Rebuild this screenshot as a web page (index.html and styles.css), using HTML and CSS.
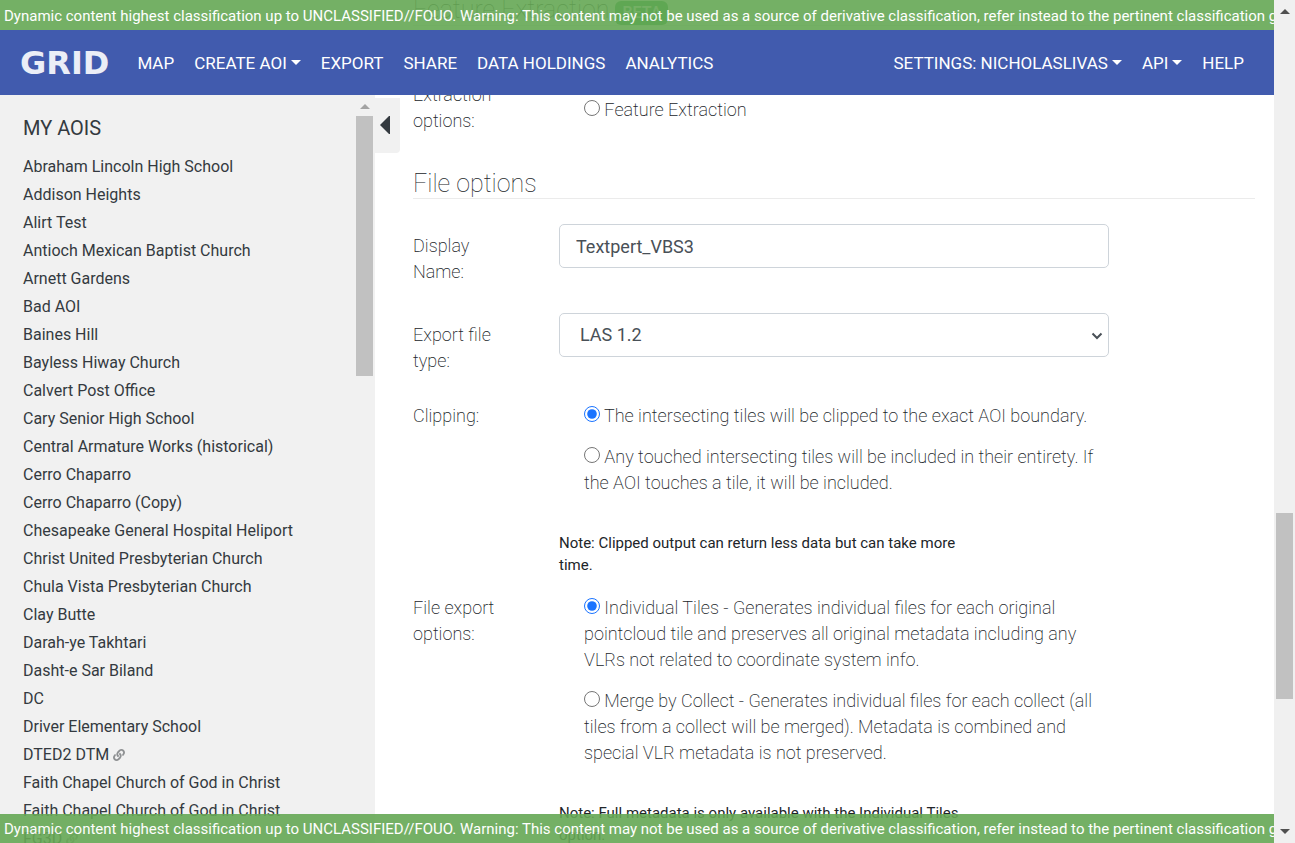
FILE: index.html
```html
<!DOCTYPE html>
<html lang="en">
<head>
<meta charset="utf-8">
<title>GRID - Export</title>
<link rel="stylesheet" href="styles.css">
</head>
<body>
<svg class="sprite" aria-hidden="true">
  <symbol id="link" viewBox="0 0 512 512"><path fill="currentColor" d="M326.612 185.391c59.747 59.809 58.927 155.698.36 214.59-.11.12-.24.25-.36.37l-67.2 67.2c-59.27 59.27-155.699 59.262-214.96 0-59.27-59.26-59.27-155.7 0-214.96l37.106-37.106c9.84-9.84 26.786-3.3 27.294 10.606.648 17.722 3.826 35.527 9.69 52.721 1.986 5.822.567 12.262-3.783 16.612l-13.087 13.087c-28.026 28.026-28.905 73.66-1.155 101.96 28.024 28.579 74.086 28.749 102.325.51l67.2-67.19c28.191-28.191 28.073-73.757 0-101.83-3.701-3.694-7.429-6.564-10.341-8.569a16.037 16.037 0 0 1-6.947-12.606c-.396-10.567 3.348-21.456 11.698-29.806l21.054-21.055c5.521-5.521 14.182-6.199 20.584-1.731a152.482 152.482 0 0 1 20.522 17.197zM467.547 44.449c-59.261-59.262-155.69-59.27-214.96 0l-67.2 67.2c-.12.12-.25.25-.36.37-58.566 58.892-59.387 154.781.36 214.59a152.454 152.454 0 0 0 20.521 17.196c6.402 4.468 15.064 3.789 20.584-1.731l21.054-21.055c8.35-8.35 12.094-19.239 11.698-29.806a16.037 16.037 0 0 0-6.947-12.606c-2.912-2.005-6.64-4.875-10.341-8.569-28.073-28.073-28.191-73.639 0-101.83l67.2-67.19c28.239-28.239 74.3-28.069 102.325.51 27.75 28.3 26.872 73.934-1.155 101.96l-13.087 13.087c-4.35 4.35-5.769 10.79-3.783 16.612 5.864 17.194 9.042 34.999 9.69 52.721.509 13.906 17.454 20.446 27.294 10.606l37.106-37.106c59.271-59.259 59.271-155.699.001-214.959z"/></symbol>
</svg>
<div class="app">
  <div class="viewport">
    <main class="content">
      <form class="export-form">
        <h2 class="section-title">Feature Extraction <span class="badge">BETA</span></h2>
        <div class="row row-first" role="radiogroup" aria-labelledby="fx-label">
          <div class="row-label" id="fx-label">Feature Extraction options:</div>
          <div class="options options-late">
            <label class="option"><input type="radio" name="fx"> Feature Extraction</label>
          </div>
        </div>

        <h2 class="section-title">File options</h2>
        <div class="row">
          <label class="row-label" for="display-name">Display Name:</label>
          <input class="control" id="display-name" type="text" value="Textpert_VBS3">
        </div>
        <div class="row row-tight">
          <label class="row-label" for="file-type">Export file type:</label>
          <div class="select-wrap">
            <select class="control select" id="file-type"><option>LAS 1.2</option></select>
            <svg class="chevron" viewBox="0 0 12 8" aria-hidden="true"><path d="M1.500 1.500 6 6l4.500-4.500" fill="none" stroke="currentColor" stroke-width="2"/></svg>
          </div>
        </div>
        <div class="row row-noted" role="radiogroup" aria-labelledby="clip-label">
          <div class="row-label" id="clip-label">Clipping:</div>
          <div>
            <div class="options">
              <label class="option"><input type="radio" name="clip" checked> The intersecting tiles will be clipped to the exact AOI boundary.</label>
              <label class="option"><input type="radio" name="clip"> Any touched intersecting tiles will be included in their entirety. If the AOI touches a tile, it will be included.</label>
            </div>
            <p class="note">Note: Clipped output can return less data but can take more time.</p>
          </div>
        </div>
        <div class="row row-noted" role="radiogroup" aria-labelledby="out-label">
          <div class="row-label" id="out-label">File export options:</div>
          <div>
            <div class="options">
              <label class="option"><input type="radio" name="out" checked> Individual Tiles - Generates individual files for each original pointcloud tile and preserves all original metadata including any VLRs not related to coordinate system info.</label>
              <label class="option"><input type="radio" name="out"> Merge by Collect - Generates individual files for each collect (all tiles from a collect will be merged). Metadata is combined and special VLR metadata is not preserved.</label>
            </div>
            <p class="note">Note: Full metadata is only available with the Individual Tiles option.</p>
          </div>
        </div>
      </form>
    </main>

    <aside class="sidebar">
      <div class="sidebar-body">
        <h1 class="sidebar-title">MY AOIS</h1>
        <ul class="aoi-list">
          <li><a href="#">Abraham Lincoln High School</a></li>
          <li><a href="#">Addison Heights</a></li>
          <li><a href="#">Alirt Test</a></li>
          <li><a href="#">Antioch Mexican Baptist Church</a></li>
          <li><a href="#">Arnett Gardens</a></li>
          <li><a href="#">Bad AOI</a></li>
          <li><a href="#">Baines Hill</a></li>
          <li><a href="#">Bayless Hiway Church</a></li>
          <li><a href="#">Calvert Post Office</a></li>
          <li><a href="#">Cary Senior High School</a></li>
          <li><a href="#">Central Armature Works (historical)</a></li>
          <li><a href="#">Cerro Chaparro</a></li>
          <li><a href="#">Cerro Chaparro (Copy)</a></li>
          <li><a href="#">Chesapeake General Hospital Heliport</a></li>
          <li><a href="#">Christ United Presbyterian Church</a></li>
          <li><a href="#">Chula Vista Presbyterian Church</a></li>
          <li><a href="#">Clay Butte</a></li>
          <li><a href="#">Darah-ye Takhtari</a></li>
          <li><a href="#">Dasht-e Sar Biland</a></li>
          <li><a href="#">DC</a></li>
          <li><a href="#">Driver Elementary School</a></li>
          <li><a href="#">DTED2 DTM</a> <svg class="link-icon" aria-hidden="true"><use href="#link"/></svg></li>
          <li><a href="#">Faith Chapel Church of God in Christ</a></li>
          <li><a href="#">Faith Chapel Church of God in Christ</a></li>
          <li><a href="#">FG3D</a> <svg class="link-icon" aria-hidden="true"><use href="#link"/></svg></li>
        </ul>
      </div>
      <div class="side-scroll" aria-hidden="true">
        <span class="arrow-up"></span>
        <span class="side-thumb"></span>
      </div>
      <button class="collapse" type="button" aria-label="Collapse sidebar"><svg class="collapse-icon" viewBox="0 0 10 18" aria-hidden="true"><path d="M10 0v18H9L0 9l9-9z" fill="currentColor"/></svg></button>
    </aside>

    <header class="navbar">
      <a class="logo" href="#">GRID</a>
      <nav class="nav">
        <a href="#">MAP</a>
        <a href="#" class="drop">CREATE AOI</a>
        <a href="#">EXPORT</a>
        <a href="#">SHARE</a>
        <a href="#">DATA HOLDINGS</a>
        <a href="#">ANALYTICS</a>
      </nav>
      <nav class="nav nav-end">
        <a href="#" class="drop">SETTINGS: NICHOLASLIVAS</a>
        <a href="#" class="drop">API</a>
        <a href="#">HELP</a>
      </nav>
    </header>
    <div class="banner banner-top">Dynamic content highest classification up to UNCLASSIFIED//FOUO. Warning: This content may not be used as a source of derivative classification, refer instead to the pertinent classification guide.</div>
    <div class="banner banner-bottom">Dynamic content highest classification up to UNCLASSIFIED//FOUO. Warning: This content may not be used as a source of derivative classification, refer instead to the pertinent classification guide.</div>
  </div>
  <div class="page-scroll" aria-hidden="true">
    <span class="arrow-up dark"></span>
    <div class="page-track"><span class="page-thumb"></span></div>
    <span class="arrow-down"></span>
  </div>
</div>
</body>
</html>
```
FILE: styles.css
```css
* { box-sizing: border-box; }

body {
  margin: 0;
  font-family: Roboto, "Liberation Sans", sans-serif;
  font-size: 18px;
  line-height: 26px;
  font-weight: 200;
  color: #212529;
  background: #fff;
}

a { color: inherit; text-decoration: none; }
.sprite { display: none; }

.app {
  display: grid;
  grid-template-columns: minmax(0, 1fr) 21px;
  height: 100vh;
  overflow: hidden;
}

.viewport { position: relative; overflow: hidden; }

/* classification banners, translucent over the page */
.banner {
  position: absolute;
  left: 0;
  right: 0;
  padding: 0 4px;
  overflow: hidden;
  white-space: nowrap;
  font-size: 15px;
  font-weight: 400;
  color: #fff;
  background: #66a855;
  opacity: 0.9;
}
.banner-top { top: 0; height: 30px; line-height: 32px; }
.banner-bottom { bottom: 0; height: 29px; line-height: 30px; }

.navbar {
  position: absolute;
  top: 30px;
  left: 0;
  right: 0;
  height: 65px;
  display: flex;
  align-items: center;
  padding: 0 30px 0 20px;
  background: #415bae;
  color: #fff;
  font-size: 17px;
  font-weight: 400;
}
.logo {
  margin-right: 28px;
  font: bold 32px/40px "DejaVu Sans", sans-serif;
  color: #ebeef7;
}
.nav { display: flex; gap: 20px; }
.nav-end { margin-left: auto; }
.drop::after {
  content: "";
  display: inline-block;
  margin-left: 4px;
  vertical-align: 4px;
  border: 5px solid transparent;
  border-top-color: currentColor;
  border-bottom: 0;
}

/* sidebar */
.sidebar {
  position: absolute;
  top: 95px;
  bottom: 0;
  left: 0;
  width: 375px;
  display: flex;
  background: #f1f1f1;
  color: #343a40;
}
.sidebar-body { flex: 1; overflow: hidden; padding: 20px 0 0 23px; }
.sidebar-title { margin: 0 0 12px; font-size: 20px; line-height: 26px; font-weight: 400; }
.aoi-list {
  margin: 0;
  padding: 0;
  list-style: none;
  font-size: 16px;
  line-height: 28px;
  font-weight: 400;
}
.link-icon { width: 12px; height: 12px; vertical-align: -1px; color: #8f9193; }
.side-scroll {
  width: 19px;
  padding: 9px 2px 0 0;
  display: flex;
  flex-direction: column;
  align-items: center;
  gap: 7px;
}
.side-thumb { width: 17px; height: 260px; background: #c1c1c1; }
.arrow-up {
  border: 5px solid transparent;
  border-bottom-color: #a3a3a3;
  border-top: 0;
}
.collapse {
  position: absolute;
  left: 100%;
  top: 3px;
  width: 25px;
  height: 55px;
  padding: 0 0 2px 5px;
  border: 0;
  border-radius: 0 0 4px 0;
  background: #f1f1f1;
  color: #343a40;
  display: flex;
  align-items: center;
}
.collapse-icon { width: 10px; height: 18px; }

/* export form; starts slightly scrolled under the top banner */
.content { padding: 0 19px 0 413px; margin-top: -5px; }
.section-title {
  margin: 0 0 25px;
  border-bottom: 1px solid #ebebeb;
  font-size: 25px;
  line-height: 29px;
  font-weight: 100;
}
.badge {
  display: inline-block;
  padding: 0 7px;
  border-radius: 6px;
  background: #28a745;
  color: #fff;
  font-size: 16px;
  line-height: 24px;
  font-weight: 500;
}
.row {
  display: grid;
  grid-template-columns: 116px minmax(0, 550px);
  column-gap: 30px;
  align-items: start;
  margin-bottom: 28px;
}
.row-label { padding-top: 9px; padding-right: 16px; }
.row-tight { margin-bottom: 20px; }
.row-noted { margin-bottom: 10px; }
.row-first { margin-bottom: 35px; }
.row-first .row-label { padding-top: 5px; }

.control {
  width: 100%;
  height: 44px;
  padding: 0 16px;
  border: 1px solid #ced4da;
  border-radius: 5px;
  background: #fff;
  color: #495057;
  font: 400 18px/26px Roboto, "Liberation Sans", sans-serif;
}
.select-wrap { position: relative; }
.select { appearance: none; padding: 0 20px; }
.chevron {
  position: absolute;
  right: 6px;
  top: 19px;
  width: 12px;
  height: 8px;
  color: #495057;
  pointer-events: none;
}

.options { display: grid; gap: 15px; padding: 9px 0 0 25px; }
.options-late { padding-top: 46px; }
.option input { width: 16px; height: 16px; margin: 0; vertical-align: 0; accent-color: #1a73ff; }
.note { margin: 36px 0 0; max-width: 410px; font-size: 15px; line-height: 22px; font-weight: 400; }

/* page scroll bar */
.page-scroll {
  display: flex;
  flex-direction: column;
  align-items: center;
  padding: 9px 0;
  background: #f0f0f0;
}
.page-track { flex: 1; display: flex; flex-direction: column; }
.page-track::before { content: ""; flex: 499 0 0; }
.page-track::after { content: ""; flex: 130 0 0; }
.page-thumb { flex: 186 0 0; width: 17px; background: #c1c1c1; }
.dark { border-bottom-color: #505050; }
.arrow-down {
  border: 5px solid transparent;
  border-top-color: #505050;
  border-bottom: 0;
}
```
